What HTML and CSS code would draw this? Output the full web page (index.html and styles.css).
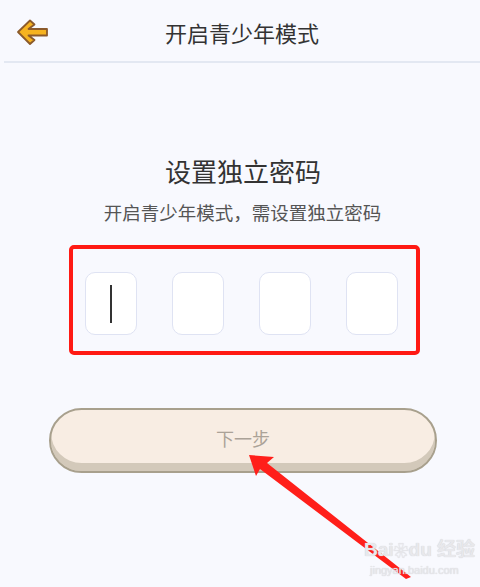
FILE: index.html
```html
<!DOCTYPE html>
<html lang="zh-CN">
<head>
    <meta charset="UTF-8">
    <meta name="viewport" content="width=device-width, initial-scale=1.0">
    <title>开启青少年模式</title>
    <link rel="stylesheet" href="styles.css">
</head>
<body>

    <!-- Top bar -->
    <header class="top-bar">
        <button class="back-btn" aria-label="返回">
            <svg width="34" height="30" viewBox="0 0 34 30">
                <path d="M2 15 L14 3.5 L18.5 7.5 L12.5 12 L31 12 L31 18.5 L12.5 18.5 L18.5 23 L14 27 Z"
                      fill="#f6b320" stroke="#8b5a2b" stroke-width="1.8" stroke-linejoin="round"/>
            </svg>
        </button>
        <h1 class="top-title">开启青少年模式</h1>
    </header>

    <!-- Password section -->
    <main class="content">
        <h2 class="pwd-title">设置独立密码</h2>
        <p class="pwd-hint">开启青少年模式，需设置独立密码</p>

        <div class="code-frame">
            <div class="code-cell active"><span class="caret"></span></div>
            <div class="code-cell"></div>
            <div class="code-cell"></div>
            <div class="code-cell"></div>
        </div>

        <button class="next-btn">下一步</button>
    </main>

    <!-- Annotation arrow -->
    <svg class="mark-arrow" width="480" height="587" viewBox="0 0 480 587">
        <path d="M249 455 L274 457 L267 463 L411 577 L406 579 L260 469 L256 476 Z" fill="#ff1f1a"/>
    </svg>

    <div class="watermark">
        <div class="wm-logo">Bai<span class="wm-paw">❀</span>du 经验</div>
        <div class="wm-url">jingyan.baidu.com</div>
    </div>

</body>
</html>
```

FILE: styles.css
```css
/* Page */
body {
    margin: 0;
    background-color: #f8f9fe;
    font-family: "Noto Sans CJK SC", "Noto Sans", sans-serif;
    color: #333;
    position: relative;
    height: 587px;
    overflow: hidden;
}

/* Top bar */
.top-bar {
    height: 61px;
    display: flex;
    align-items: center;
    justify-content: center;
    position: relative;
    border-bottom: 2px solid #e3e8f2;
    margin-left: 4px;
}

.back-btn {
    position: absolute;
    left: 12px;
    top: 17px;
    padding: 0;
    border: none;
    background: transparent;
}

.back-btn svg {
    display: block;
}

.top-title {
    margin: 3px 0 0 0;
    font-size: 22px;
    font-weight: 400;
    color: #333;
}

/* Content */
.content {
    padding-top: 90px;
    display: flex;
    flex-direction: column;
    align-items: center;
}

.pwd-title {
    margin: 0 0 0 6px;
    font-size: 26px;
    line-height: 36px;
    font-weight: 400;
    color: #333;
}

.pwd-hint {
    margin: 11px 0 0 5px;
    font-size: 18.5px;
    line-height: 24px;
    color: #555;
}

/* Code inputs, framed in red */
.code-frame {
    margin: 21px 0 0 9px;
    width: 351px;
    height: 110px;
    border: 4px solid #ff1a14;
    border-radius: 5px;
    padding: 23px 0 0 12px;
    box-sizing: border-box;
    display: flex;
    gap: 35px;
    align-items: flex-start;
}

.code-cell {
    width: 52px;
    height: 63px;
    background-color: #fff;
    border: 1.5px solid #dfe3f3;
    border-radius: 10px;
    box-sizing: border-box;
    display: flex;
    align-items: center;
    justify-content: center;
}

.caret {
    width: 2.5px;
    height: 38px;
    background-color: #333;
}

/* Next button */
.next-btn {
    margin: 53px 0 0 6px;
    width: 388px;
    height: 65px;
    border: 2px solid #a8a08d;
    border-radius: 33px;
    background-color: #f8ede3;
    box-shadow: inset 0 -8px 0 #d3c9ba;
    color: #aba297;
    font-family: inherit;
    font-size: 18px;
    padding: 0 0 6px 0;
}

/* Annotation overlay */
.mark-arrow {
    position: absolute;
    left: 0;
    top: 0;
    pointer-events: none;
}

.watermark {
    position: absolute;
    left: 364px;
    top: 538px;
    color: #e8e8ec;
    text-shadow: 0 0 1px #c8c8cc;
    font-family: "Liberation Sans", "Noto Sans CJK SC", sans-serif;
    white-space: nowrap;
}

.wm-logo {
    font-size: 19px;
    font-weight: bold;
    line-height: 24px;
}

.wm-paw {
    font-size: 15px;
}

.wm-url {
    font-size: 11px;
    line-height: 14px;
    margin-left: 6px;
}
```
